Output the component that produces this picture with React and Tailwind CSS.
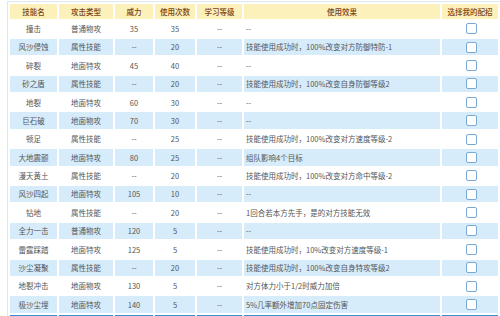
import React from 'react'

const rows = [
  ['撞击', '普通物攻', '35', '35', '--', '--'],
  ['风沙侵蚀', '属性技能', '--', '20', '--', '技能使用成功时，100%改变对方防御特防-1'],
  ['碎裂', '地面特攻', '45', '40', '--', '--'],
  ['砂之盾', '属性技能', '--', '20', '--', '技能使用成功时，100%改变自身防御等级2'],
  ['地裂', '地面特攻', '60', '30', '--', '--'],
  ['巨石破', '地面物攻', '70', '30', '--', '--'],
  ['顿足', '属性技能', '--', '25', '--', '技能使用成功时，100%改变对方速度等级-2'],
  ['大地震颤', '地面特攻', '80', '25', '--', '组队影响4个目标'],
  ['漫天黄土', '属性技能', '--', '20', '--', '技能使用成功时，100%改变对方命中等级-2'],
  ['风沙四起', '地面特攻', '105', '10', '--', '--'],
  ['钻地', '属性技能', '--', '20', '--', '1回合若本方先手，是的对方技能无效'],
  ['全力一击', '普通物攻', '120', '5', '--', '--'],
  ['雷霆踩踏', '地面特攻', '125', '5', '--', '技能使用成功时，10%改变对方速度等级-1'],
  ['沙尘凝聚', '属性技能', '--', '20', '--', '技能使用成功时，100%改变自身特攻等级2'],
  ['地裂冲击', '地面物攻', '130', '5', '--', '对方体力小于1/2时威力加倍'],
  ['极沙尘埋', '地面特攻', '140', '5', '--', '5%几率额外增加70点固定伤害'],
]

const headers = ['技能名', '攻击类型', '威力', '使用次数', '学习等级', '使用效果', '选择我的配招']

export default function App() {
  return (
    <div
      className="w-[500px] h-[316px] overflow-hidden bg-white pt-[1px] pl-[7px]"
      style={{ fontFamily: '"Noto Sans CJK SC", "Liberation Sans", sans-serif' }}
    >
      <div className="border-l border-t border-[#dfe6ed] pt-[2px] pl-[2px]">
        <div className="grid grid-cols-[47px_54px_38px_40px_45px_196px_56px] grid-rows-[14.5px_repeat(16,16.4px)_10px] gap-[2px] text-[7.5px] leading-none">
          {headers.map((h) => (
            <div key={h} className="bg-[#fcf1bb] text-[#7a4518] font-medium flex items-center justify-center">
              {h}
            </div>
          ))}

          {rows.map((r, i) => {
            const bg = i % 2 === 1 ? 'bg-[#d7ecfb]' : 'bg-white'
            return (
              <React.Fragment key={r[0]}>
                {r.slice(0, 5).map((c, j) => (
                  <div key={j} className={`${bg} text-[#555] flex items-center justify-center`}>
                    {c}
                  </div>
                ))}
                <div className={`${bg} text-[#555] flex items-center pl-[2px]`}>{r[5]}</div>
                <div className={`${bg} flex items-center justify-center pl-[3px]`}>
                  <span className="w-[11px] h-[11px] rounded-[2px] border border-[#79a9d4] bg-white" />
                </div>
              </React.Fragment>
            )
          })}

          {headers.map((h) => (
            <div key={'b' + h} className="bg-[#3d8fd8]" />
          ))}
        </div>
      </div>
    </div>
  )
}
